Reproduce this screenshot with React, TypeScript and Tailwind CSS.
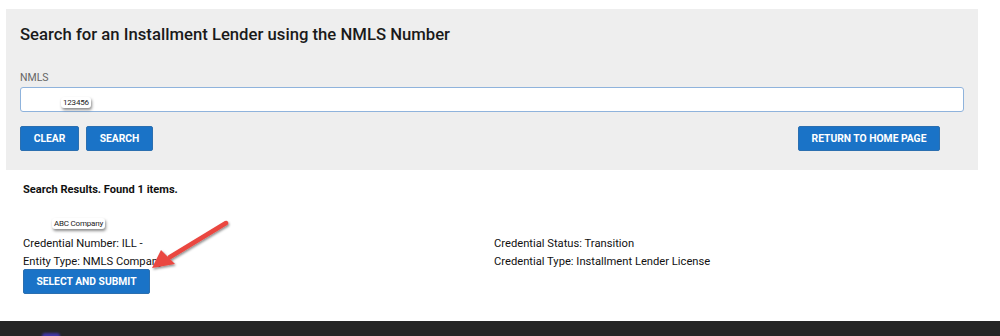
import React from 'react';

const Sticker: React.FC<{ text: string }> = ({ text }) => (
  <span className="inline-block bg-white rounded-[3px] px-[2px] leading-[11px] text-[8px] tracking-[-0.2px] text-[#222] shadow-[1px_2px_3px_rgba(0,0,0,0.45)]">
    {text}
  </span>
);

const Btn: React.FC<{ label: string; className?: string }> = ({ label, className }) => (
  <button className={`h-[25px] bg-[#1a73c7] text-white text-[10.3px] font-bold uppercase rounded-[2px] border border-[#2b6fb0] ${className ?? ''}`}>
    {label}
  </button>
);

const App: React.FC = () => {
  return (
    <div className="relative w-[1000px] h-[336px] bg-white overflow-hidden font-['Roboto','Liberation_Sans',sans-serif] text-[#111]">
      <div className="pt-[9px] pl-[6px] pr-[22px]">
        <section className="bg-[#eeeeee] h-[161px] pl-[14px] pr-[14px] pt-[15px]">
          <h1 className="text-[16.7px] font-medium leading-[22px] text-[#1a1a1a]">Search for an Installment Lender using the NMLS Number</h1>
          <label className="block mt-[25px] text-[10.5px] leading-[14px] text-[#666]">NMLS</label>
          <div className="mt-[2px] h-[25px] bg-white border border-[#8fb3dc] rounded-[3px] pl-[40px] pt-[9px] flex items-start">
            <Sticker text="123456" />
          </div>
          <div className="mt-[14px] flex items-center">
            <Btn label="Clear" className="w-[59px]" />
            <Btn label="Search" className="w-[67px] ml-[7px]" />
            <Btn label="Return to Home Page" className="w-[142px] ml-auto mr-[24px]" />
          </div>
        </section>
      </div>

      <div className="pl-[23px] pt-[12px]">
        <h2 className="text-[11.1px] font-bold leading-[15px]">Search Results. Found 1 items.</h2>
        <div className="mt-[21px] pl-[29px] h-[14px] flex items-start">
          <Sticker text="ABC Company" />
        </div>
        <div className="grid grid-cols-[471px_1fr] text-[11.2px] leading-[18px] mt-[3px]">
          <div>Credential Number: ILL -</div>
          <div>Credential Status: Transition</div>
          <div>Entity Type: NMLS Company</div>
          <div>Credential Type: Installment Lender License</div>
        </div>
        <div className="flex mt-[-2px]">
          <Btn label="Select and Submit" className="w-[127px]" />
        </div>
      </div>

      <svg className="absolute left-0 top-0" width="1000" height="336" viewBox="0 0 1000 336">
        <defs>
          <filter id="sh" x="-20%" y="-20%" width="140%" height="140%">
            <feDropShadow dx="1" dy="1.5" stdDeviation="1.2" floodColor="#000" floodOpacity="0.45" />
          </filter>
        </defs>
        <g filter="url(#sh)">
          <line x1="226" y1="223" x2="170" y2="257" stroke="#ea4640" strokeWidth="4.5" strokeLinecap="round" />
          <polygon points="152,268 161,250 175,264" fill="#ea4640" />
        </g>
      </svg>

      <footer className="absolute left-0 right-0 bottom-0 h-[15px] bg-[#252525]">
        <div className="absolute left-[42px] top-[12px] w-[18px] h-[6px] rounded-full bg-[#3f35a0] blur-[1px]" />
      </footer>
    </div>
  );
};

export default App;
